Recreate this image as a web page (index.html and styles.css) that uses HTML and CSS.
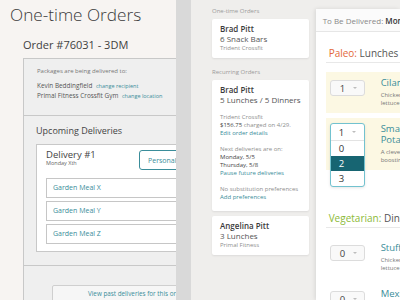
FILE: index.html
```html
<!DOCTYPE html>
<html lang="en">
<head>
  <meta charset="UTF-8">
  <title>One-time Orders</title>
  <link rel="stylesheet" href="styles.css">
</head>
<body>
  <div class="app">

    <section class="orders">
      <h1>One-time Orders</h1>
      <h2>Order #76031 - 3DM</h2>

      <div class="order-box">
        <div class="recipient">
          <p class="muted">Packages are being delivered to:</p>
          <p class="addr">Kevin Beddingfield <a href="#">change recipient</a></p>
          <p class="addr">Primal Fitness Crossfit Gym <a href="#">change location</a></p>
        </div>

        <div class="upcoming">
          <h3>Upcoming Deliveries</h3>
          <div class="delivery">
            <div class="delivery-head">
              <div>
                <h4>Delivery #1</h4>
                <span class="day">Monday Xth</span>
              </div>
              <button class="outline">Personalize</button>
            </div>
            <div class="meal">Garden Meal X</div>
            <div class="meal">Garden Meal Y</div>
            <div class="meal">Garden Meal Z</div>
          </div>
        </div>

        <div class="past">
          <button>View past deliveries for this order</button>
        </div>
      </div>
    </section>

    <div class="gutter"></div>

    <aside class="list">
      <p class="label">One-time Orders</p>
      <div class="card">
        <p class="name">Brad Pitt</p>
        <p class="sub">6 Snack Bars</p>
        <p class="small">Trident Crossfit</p>
      </div>

      <p class="label">Recurring Orders</p>
      <div class="card card-open">
        <p class="name">Brad Pitt</p>
        <p class="sub">5 Lunches / 5 Dinners</p>
        <div class="group">
          <p class="small">Trident Crossfit</p>
          <p class="small"><b>$156.75</b> charged on 4/29.</p>
          <a class="small link" href="#">Edit order details</a>
        </div>
        <div class="group">
          <p class="small">Next deliveries are on:</p>
          <p class="small dark">Monday, 5/5</p>
          <p class="small dark">Thursday, 5/8</p>
          <a class="small link" href="#">Pause future deliveries</a>
        </div>
        <div class="group">
          <p class="small">No substitution preferences</p>
          <a class="small link" href="#">Add preferences</a>
        </div>
      </div>

      <div class="card">
        <p class="name">Angelina Pitt</p>
        <p class="sub">3 Lunches</p>
        <p class="small">Primal Fitness</p>
      </div>
    </aside>

    <section class="detail">
      <div class="detail-head">To Be Delivered: <b>Monday, 5/5</b></div>

      <div class="detail-body">
        <h3 class="cat"><span class="paleo">Paleo:</span> Lunches</h3>

        <div class="dish hl">
          <div class="qty"><span>1</span><i class="caret"></i></div>
          <div class="dish-text">
            <p class="dish-name">Cilantro Lime Chicken</p>
            <p class="dish-desc">Chicken with cilantro lime</p>
            <p class="dish-desc">lettuce wraps and salsa</p>
          </div>
        </div>

        <div class="dish hl">
          <div class="qty open">
            <span>1</span><i class="caret"></i>
            <ul class="menu">
              <li class="menu-current"><span>1</span><i class="caret"></i></li>
              <li>0</li>
              <li class="active">2</li>
              <li>3</li>
            </ul>
          </div>
          <div class="dish-text">
            <p class="dish-name">Smashed Sweet<br>Potatoes</p>
            <p class="dish-desc">A clever side dish</p>
            <p class="dish-desc">boosting energy</p>
          </div>
        </div>

        <h3 class="cat cat-next"><span class="veg">Vegetarian:</span> Dinners</h3>

        <div class="dish">
          <div class="qty"><span>0</span><i class="caret"></i></div>
          <div class="dish-text">
            <p class="dish-name">Stuffed Peppers</p>
            <p class="dish-desc">Chicken with cilantro lime</p>
            <p class="dish-desc">lettuce wraps and salsa</p>
          </div>
        </div>

        <div class="dish">
          <div class="qty"><span>0</span><i class="caret"></i></div>
          <div class="dish-text">
            <p class="dish-name">Mexican Bowl</p>
          </div>
        </div>
      </div>
    </section>

  </div>
</body>
</html>
```

FILE: styles.css
```css
* {
  margin: 0;
  padding: 0;
  box-sizing: border-box;
}

body {
  font-family: 'Open Sans', 'Liberation Sans', sans-serif;
  color: #444;
  background-color: #efeeec;
}

a {
  text-decoration: none;
  color: #3a8d9a;
}

.app {
  display: flex;
  width: 400px;
  height: 300px;
  overflow: hidden;
}

/* left panel */

.orders {
  flex: 0 0 176px;
  background-color: #f7f4f2;
  overflow: hidden;
  padding: 5px 0 0 10px;
  white-space: nowrap;
}

.orders h1 {
  font-size: 17.2px;
  font-weight: 300;
  line-height: 20px;
  color: #3a3a3a;
}

.orders h2 {
  font-size: 11px;
  font-weight: 400;
  line-height: 14px;
  color: #3f3f3f;
  margin: 13px 0 6px 13px;
}

.order-box {
  width: 220px;
  margin-left: 13px;
  border: 1px solid #c8c8c8;
  border-bottom: none;
  background-color: #efefef;
  height: 260px;
}

.recipient {
  padding: 8px 0 14px 13px;
  border-bottom: 1px solid #c8c8c8;
}

.muted {
  font-size: 6px;
  line-height: 8px;
  color: #777;
  margin-bottom: 6px;
}

.addr {
  font-size: 6.4px;
  line-height: 9px;
  color: #555;
}

.addr a {
  font-size: 5.5px;
  margin-left: 2px;
}

.upcoming {
  padding: 9px 0 13px 12px;
  border-bottom: 1px solid #c8c8c8;
}

.upcoming h3 {
  font-size: 9px;
  font-weight: 400;
  line-height: 12px;
  color: #444;
  margin-bottom: 7px;
}

.delivery {
  width: 200px;
  background-color: #fff;
  border: 1px solid #c8c8c8;
  padding: 4px 0 7px 9px;
}

.delivery-head {
  display: grid;
  grid-template-columns: 93px auto;
  align-items: start;
  margin-bottom: 8px;
}

.delivery-head h4 {
  font-size: 9.5px;
  font-weight: 400;
  line-height: 11px;
  color: #444;
}

.day {
  display: block;
  font-size: 5.5px;
  line-height: 7px;
  color: #666;
}

.outline {
  justify-self: start;
  margin-top: 1px;
  height: 20px;
  width: 70px;
  border: 1px solid #3a8d9a;
  border-radius: 3px;
  background-color: #fff;
  color: #3a8d9a;
  font-family: inherit;
  font-size: 7px;
  text-align: left;
  padding-left: 8px;
}

.meal {
  height: 20px;
  line-height: 18px;
  border: 1px solid #c6c6c6;
  padding-left: 6px;
  margin-right: 10px;
  font-size: 7px;
  color: #3a8d9a;
  margin-bottom: 3px;
}

.meal:last-child {
  margin-bottom: 0;
}

.past {
  padding: 13px 0 0 28px;
}

.past button {
  width: 180px;
  height: 18px;
  border: 1px solid #cfcfcf;
  border-radius: 2px;
  background-color: #f6f6f6;
  color: #3a8d9a;
  font-family: inherit;
  font-size: 6.3px;
  text-align: left;
  padding-left: 35px;
}

.gutter {
  flex: 0 0 15px;
  background-color: #d9d9d9;
}

/* middle list */

.list {
  flex: 0 0 122px;
  padding: 7px 7px 0 21px;
  white-space: nowrap;
}

.label {
  font-size: 6px;
  line-height: 8px;
  color: #9a9a9a;
  margin-bottom: 4px;
}

.card {
  background-color: #fff;
  border-radius: 2px;
  box-shadow: 0 1px 2px rgba(0, 0, 0, 0.08);
  padding: 5px 8px 6px;
  margin-bottom: 10px;
}

.card-open {
  padding-bottom: 10px;
  margin-bottom: 5px;
}

.name {
  font-size: 8px;
  font-weight: 600;
  line-height: 10px;
  color: #3a3a3a;
}

.sub {
  font-size: 8px;
  line-height: 10px;
  color: #555;
}

.small {
  display: block;
  font-size: 6px;
  line-height: 8px;
  color: #8e8e8e;
}

.small b {
  font-weight: 400;
  color: #444;
}

.small.dark {
  color: #444;
}

.small.link {
  color: #3a8d9a;
}

.group {
  margin-top: 8px;
}

/* right panel */

.detail {
  flex: 1;
  margin-top: 9px;
  background-color: #fff;
  box-shadow: -1px 0 4px rgba(0, 0, 0, 0.1);
  white-space: nowrap;
  overflow: hidden;
}

.detail-head {
  height: 23px;
  line-height: 23px;
  padding-left: 7px;
  font-size: 8px;
  color: #888;
  background-color: #fbfbfb;
  border-bottom: 1px solid #e6e6e6;
}

.detail-head b {
  font-weight: 600;
  color: #333;
}

.detail-body {
  padding: 15px 0 0 10px;
}

.cat {
  font-size: 10px;
  font-weight: 400;
  line-height: 12px;
  color: #555;
  padding: 0 0 3px 3px;
  border-bottom: 1px solid #e8e8e8;
}

.cat-next {
  margin-top: 42px;
}

.paleo {
  color: #e3683a;
}

.veg {
  color: #8cba38;
}

.dish {
  display: flex;
  gap: 16px;
  padding: 5px 0 6px 4px;
  margin-top: 5px;
}

.cat + .dish {
  margin-top: 9px;
}

.dish.hl {
  background-color: #fcf8e3;
}

.qty {
  position: relative;
  flex: 0 0 35px;
  height: 16px;
  margin-top: 3px;
  display: flex;
  align-items: center;
  gap: 8px;
  padding-left: 9px;
  border: 1px solid #dcdcdc;
  border-radius: 3px;
  background-color: #f9f9f9;
  font-size: 9.5px;
  color: #444;
}

.caret {
  width: 0;
  height: 0;
  border-left: 2px solid transparent;
  border-right: 2px solid transparent;
  border-top: 2.5px solid #bdbdbd;
}

.menu {
  position: absolute;
  top: -4px;
  left: -1px;
  width: 35px;
  list-style: none;
  background-color: #fff;
  border: 1px solid #72c2cf;
  border-radius: 3px;
  box-shadow: 0 1px 3px rgba(0, 0, 0, 0.1);
  overflow: hidden;
  z-index: 2;
}

.menu li {
  height: 15px;
  line-height: 15px;
  padding-left: 8px;
  font-size: 9.5px;
  color: #333;
}

.menu .menu-current {
  height: 17px;
  display: flex;
  align-items: center;
  gap: 8px;
  border-bottom: 1px solid #e3e3e3;
}

.menu .active {
  background-color: #176572;
  color: #fff;
}

.dish-name {
  font-size: 9.5px;
  line-height: 11px;
  color: #3a8d9a;
}

.dish-desc {
  font-size: 6px;
  line-height: 8px;
  color: #777;
}

.dish-name + .dish-desc {
  margin-top: 3px;
}
```
